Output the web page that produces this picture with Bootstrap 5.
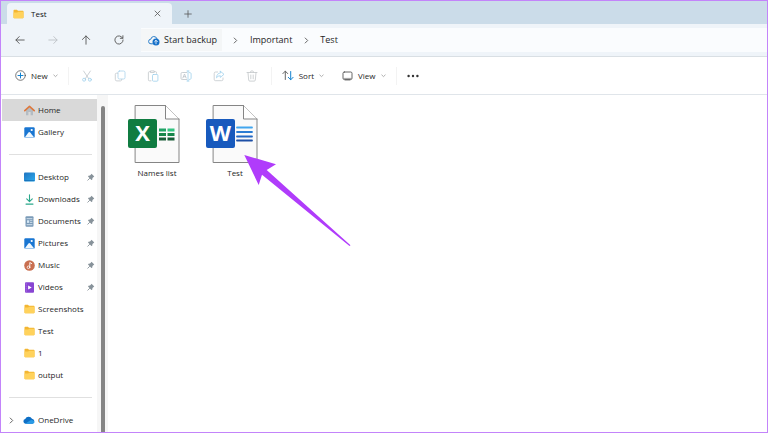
<!DOCTYPE html>
<html lang="en">
<head>
<meta charset="utf-8">
<meta name="viewport" content="width=device-width, initial-scale=1">
<title>Test</title>
<link href="https://cdn.jsdelivr.net/npm/bootstrap@5.3.0/dist/css/bootstrap.min.css" rel="stylesheet">
<style>
body{font-family:"Open Sans","Noto Sans",sans-serif;font-size:8px;line-height:12px;color:#262626;background:#fff}
svg{display:block;flex:none;fill:none;stroke-linecap:round;stroke-linejoin:round}
button{border:0;background:none;padding:0;color:inherit;line-height:inherit}
a{color:inherit;text-decoration:none}
.explorer{border:1px solid #c384fa;min-height:100vh}
.titlebar{background:#cbdce9;height:23px;padding:2px 0 0 6px}
.tab{width:165px;background:#eff4f9;border-radius:4px 4px 0 0;padding:0 11px 0 6px}
.tab-name{margin-left:7px;color:#111}
.new-tab{width:32px}
.navbar-row{height:33px;background:#eff4f9;border-bottom:1px solid #d9dfe4}
.nav-btns{padding-left:2px}
.nav-btns button{width:33px;height:24px}
.address{background:#fafcfe;height:24px;margin-left:6px;font-size:9px}
.backup{background:#f4f6f7;height:22px;padding:0 5px 0 7px;gap:4px}
.crumb-arrow{width:28px}
.tools{height:38px;padding-left:14px;border-bottom:1px solid #e0e5ea}
.tools button{height:24px}
.tool-text{gap:5px}
.tool-icons{padding:0 2px}
.tool-icon{width:33px}
.sep{width:1px;height:18px;background:#f3f3f3;margin:0 0 0 10px}
.sort-btn{margin-left:10px}
.view-btn{margin-left:18px}
.more-btn{margin-left:10px}
.sidebar{width:96px;padding:4px 0 0 1px}
.side-item{height:22px;padding:0 2px 0 22px;gap:3px}
.side-item.current{background:#d9d9d9}
.side-item.expandable{padding-left:7px}
.side-item .twisty{margin-right:6px}
.side-rule{height:23px;padding:11px 5px 0 7px}
.side-rule hr{margin:0;border-top:1px solid #e0e0e0;opacity:1}
.scroll-track{width:11px;background:#f6f6f6;padding:11px 3px 0 4px}
.scroll-thumb{background:#858585;border-radius:2px 2px 0 0}
.files{padding:9px 0 0 10px}
.file{width:78px;gap:3px}
.pointer{position:absolute;left:243px;top:153px}
</style>
</head>
<body>
<svg width="0" height="0" class="position-absolute" aria-hidden="true">
<defs>
<symbol id="folder" viewBox="0 0 11 10"><path d="M.5 1.5q0-.8.8-.8h2.6L5 1.8h4.8q.7 0 .7.7v6q0 .8-.7.8H1.3q-.8 0-.8-.8z" fill="#f3b632"/><path d="M.5 3.6h3.7l1-.9h5.3v5.8q0 .8-.7.8H1.3q-.8 0-.8-.8z" fill="#ffd25c"/></symbol>
<symbol id="pin" viewBox="0 0 8 8"><path d="M4.5.7 7.3 3.5 6.6 4 5.5 5 5.2 6.7 4.4 7 1 3.6 1.5 2.8 3 2.6 4 1.4z" fill="#87929a"/><path d="M2.6 5.4.8 7.2" stroke="#87929a" stroke-width=".9"/></symbol>
<symbol id="picture" viewBox="0 0 11 11"><rect x=".3" y=".3" width="10.4" height="10.4" rx="1.2" fill="#1976d2"/><path d="M.8 10.4 4.4 5.6q.9-1 1.8 0l4 4.8z" fill="#eff8ff"/><circle cx="7.7" cy="3" r="1.1" fill="#fff"/></symbol>
<symbol id="down" viewBox="0 0 5 4"><path d="m.8 1 1.7 1.6L4.2 1" stroke="#9a9a9a" stroke-width=".8"/></symbol>
<symbol id="right" viewBox="0 0 5 7"><path d="m1.2 1 2.500 2.500L1.200 6" stroke="#666" stroke-width="1"/></symbol>
</defs>
</svg>
<div class="explorer d-flex flex-column position-relative">
<header>
<div class="titlebar d-flex">
<div class="tab d-flex align-items-center">
<svg width="11" height="10"><use href="#folder"/></svg><span class="tab-name">Test</span>
<button class="ms-auto" type="button" aria-label="Close tab"><svg width="7" height="7" viewBox="0 0 7 7"><path d="m1 1 5 5m0-5L1 6" stroke="#555" stroke-width=".8"/></svg></button>
</div>
<button class="new-tab d-flex align-items-center justify-content-center" type="button" aria-label="New tab"><svg width="8" height="8" viewBox="0 0 8 8"><path d="M4 .7v6.6M.7 4h6.600" stroke="#555" stroke-width=".8"/></svg></button>
</div>
<div class="navbar-row d-flex align-items-center">
<div class="nav-btns d-flex">
<button class="d-flex align-items-center justify-content-center" type="button" aria-label="Back"><svg width="10" height="10" viewBox="0 0 10 10"><path d="M9.200 5H1m3.200-3.400L.9 5l3.300 3.400" stroke="#555" stroke-width=".9"/></svg></button>
<button class="d-flex align-items-center justify-content-center" type="button" aria-label="Forward"><svg width="10" height="10" viewBox="0 0 10 10"><path d="M.8 5H9M5.800 1.600 9.100 5 5.800 8.400" stroke="#bcc1c5" stroke-width=".9"/></svg></button>
<button class="d-flex align-items-center justify-content-center" type="button" aria-label="Up"><svg width="10" height="10" viewBox="0 0 10 10"><path d="M5 9.200V1M1.400 4.500 5 .9l3.600 3.600" stroke="#555" stroke-width=".9"/></svg></button>
<button class="d-flex align-items-center justify-content-center" type="button" aria-label="Refresh"><svg width="10" height="10" viewBox="0 0 10 10"><path d="M8.700 3.200A4.100 4.100 0 1 0 9.100 5M8.900.7v2.600H6.300" stroke="#555" stroke-width=".9"/></svg></button>
</div>
<nav class="address d-flex align-items-center flex-grow-1" aria-label="Address">
<a href="#" class="backup d-flex align-items-center"><svg width="12" height="11" viewBox="0 0 12 11"><path d="M4.500 8.800H3A2.300 2.300 0 0 1 2.800 4.200 3.200 3.200 0 0 1 9 3.700" stroke="#2c7fc9" stroke-width="1"/><circle cx="8" cy="7" r="3.500" fill="#1670c8"/><path d="M8 8.800V5.400M6.600 6.700 8 5.300l1.400 1.400" stroke="#fff" stroke-width=".8"/></svg>Start backup</a>
<span class="crumb-arrow d-flex justify-content-center"><svg width="5" height="7"><use href="#right"/></svg></span>
<a href="#">Important</a>
<span class="crumb-arrow d-flex justify-content-center"><svg width="5" height="7"><use href="#right"/></svg></span>
<a href="#">Test</a>
</nav>
</div>
<div class="tools d-flex align-items-center">
<button class="tool-text d-flex align-items-center" type="button"><svg width="11" height="11" viewBox="0 0 11 11"><circle cx="5.500" cy="5.500" r="4.800" stroke="#555" stroke-width=".8"/><path d="M5.500 3v5M3 5.500h5" stroke="#1583cf" stroke-width="1"/></svg><span>New</span><svg width="5" height="4"><use href="#down"/></svg></button>
<span class="sep"></span>
<div class="tool-icons d-flex">
<button class="tool-icon d-flex justify-content-center align-items-center" type="button" aria-label="Cut"><svg width="12" height="12" viewBox="0 0 12 12"><path d="m2.600 1 5.200 7.800M9.400 1 4.200 8.800" stroke="#bfc5ca" stroke-width=".8"/><circle cx="3.100" cy="9.700" r="1.500" stroke="#9fd0ec" stroke-width=".8"/><circle cx="8.900" cy="9.700" r="1.500" stroke="#9fd0ec" stroke-width=".8"/></svg></button>
<button class="tool-icon d-flex justify-content-center align-items-center" type="button" aria-label="Copy"><svg width="12" height="12" viewBox="0 0 12 12"><rect x="4" y="1" width="7" height="8" rx="1.500" stroke="#a9d3ec" stroke-width=".8"/><path d="M3.700 3.200H2.500q-1.200 0-1.200 1.200v5q0 1.500 1.500 1.500h3.700q1.300 0 1.300-1.600" stroke="#c3c8cc" stroke-width=".8"/></svg></button>
<button class="tool-icon d-flex justify-content-center align-items-center" type="button" aria-label="Paste"><svg width="12" height="12" viewBox="0 0 12 12"><path d="M4 10.800H2.300q-.9 0-.9-.9V2.600q0-.9.9-.9h1.300m3.800 0h1.200q.9 0 .9.9v.8M3.800.9h3.400v1.600H3.800z" stroke="#c3c8cc" stroke-width=".8"/><rect x="5.500" y="4.500" width="5.400" height="6.700" rx=".9" stroke="#9fd0ec" stroke-width=".8"/></svg></button>
<button class="tool-icon d-flex justify-content-center align-items-center" type="button" aria-label="Rename"><svg width="12" height="12" viewBox="0 0 12 12"><path d="M6.700 2.500H2.200q-1.200 0-1.200 1.200v4.600q0 1.200 1.200 1.200h4.500M2.800 8l1.700-4L6.200 8M3.400 6.700h2.200" stroke="#bcc4ca" stroke-width=".8"/><path d="M8 1v10M7 1h2M7 11h2m.3-8.500q1.800 0 1.800 1.200v4.600q0 1.200-1.800 1.200" stroke="#9fd0ec" stroke-width=".8"/></svg></button>
<button class="tool-icon d-flex justify-content-center align-items-center" type="button" aria-label="Share"><svg width="12" height="12" viewBox="0 0 12 12"><path d="M4.700 2H2.600q-1.400 0-1.400 1.400v5.900q0 1.400 1.400 1.400h6q1.400 0 1.400-1.400V8" stroke="#c3c8cc" stroke-width=".8"/><path d="M7.300 1.200 11 4.300 7.300 7.400V5.700Q4.800 5.700 3.500 7.800 3.800 3.200 7.300 2.900z" stroke="#9fd0ec" stroke-width=".8"/></svg></button>
<button class="tool-icon d-flex justify-content-center align-items-center" type="button" aria-label="Delete"><svg width="12" height="12" viewBox="0 0 12 12"><path d="M1 2.500h10M4.300 2.300Q4.300.8 6 .8t1.700 1.500M2 2.700l.7 7.400q.1 1 1.100 1h4.400q1 0 1.100-1l.7-7.400M4.800 5v3.800M7.200 5v3.800" stroke="#c3c6c9" stroke-width=".8"/></svg></button>
</div>
<span class="sep ms-0"></span>
<button class="tool-text sort-btn d-flex align-items-center" type="button"><svg width="12" height="11" viewBox="0 0 12 11"><path d="M3.300 9.500V1.200M.9 3.600l2.400-2.500 2.400 2.500" stroke="#666" stroke-width="1"/><path d="M8.700 1.500v8.200M6.300 7.300l2.400 2.500 2.400-2.500" stroke="#1583cf" stroke-width="1"/></svg><span>Sort</span><svg width="5" height="4"><use href="#down"/></svg></button>
<button class="tool-text view-btn d-flex align-items-center" type="button"><svg width="11" height="10" viewBox="0 0 11 10"><rect x="1" y="1" width="9" height="7.500" rx="1.300" stroke="#555" stroke-width=".9"/><path d="M2 7.400h7M3 9.200h5" stroke="#777" stroke-width=".7"/></svg><span>View</span><svg width="5" height="4"><use href="#down"/></svg></button>
<span class="sep"></span>
<button class="more-btn d-flex align-items-center" type="button" aria-label="See more"><svg width="12" height="4" viewBox="0 0 12 4"><g fill="#333"><circle cx="1.600" cy="2" r="1.200"/><circle cx="6" cy="2" r="1.200"/><circle cx="10.400" cy="2" r="1.200"/></g></svg></button>
</div>
</header>
<div class="d-flex flex-grow-1">
<nav class="sidebar flex-shrink-0" aria-label="Folders">
<a href="#" class="side-item current d-flex align-items-center"><svg width="11" height="11" viewBox="0 0 11 11"><path d="M2 5v5.200h2.400V7.100h2.200v3.100H9V5L5.500 2z" fill="#b4bcc3"/><path d="m.8 5.700 4.700-4.400 4.700 4.400" stroke="#dd783d" stroke-width="1.600"/></svg>Home</a>
<a href="#" class="side-item d-flex align-items-center"><svg width="11" height="11"><use href="#picture"/></svg>Gallery</a>
<div class="side-rule"><hr></div>
<a href="#" class="side-item d-flex align-items-center"><svg width="11" height="10" viewBox="0 0 11 10"><defs><linearGradient id="desk" x2="1" y2="1"><stop stop-color="#1f73bf"/><stop offset="1" stop-color="#2cabed"/></linearGradient></defs><rect y=".5" width="11" height="9" rx="1" fill="url(#desk)"/><path d="M1 8.600h9" stroke="#1264ac" stroke-width=".7"/></svg>Desktop<svg class="ms-auto" width="8" height="8"><use href="#pin"/></svg></a>
<a href="#" class="side-item d-flex align-items-center"><svg width="11" height="11" viewBox="0 0 11 11"><path d="M5.500.8v6.600M2.700 4.900l2.800 2.800 2.800-2.800M2 10.100h7" stroke="#2aa88b" stroke-width="1.100"/></svg>Downloads<svg class="ms-auto" width="8" height="8"><use href="#pin"/></svg></a>
<a href="#" class="side-item d-flex align-items-center"><svg width="11" height="11" viewBox="0 0 11 11"><rect x="1.500" y=".3" width="8" height="10.400" rx="1" fill="#7b9bb8"/><path d="M3 2.700h5M3 8.700h5" stroke="#e6f0f8" stroke-width=".8"/><path d="M3 4.300h2.200v2.600H3z" fill="#d6e8f6"/><path d="M6.300 4.700H8M6.300 6.500H8" stroke="#e6f0f8" stroke-width=".7"/></svg>Documents<svg class="ms-auto" width="8" height="8"><use href="#pin"/></svg></a>
<a href="#" class="side-item d-flex align-items-center"><svg width="11" height="11"><use href="#picture"/></svg>Pictures<svg class="ms-auto" width="8" height="8"><use href="#pin"/></svg></a>
<a href="#" class="side-item d-flex align-items-center"><svg width="11" height="11" viewBox="0 0 11 11"><circle cx="5.500" cy="5.500" r="5.300" fill="#c96f50"/><circle cx="4.500" cy="7.300" r="1.300" stroke="#fff" stroke-width=".8"/><path d="M5.800 7.200V2.500l1.900 1.100" stroke="#fff" stroke-width=".9"/></svg>Music<svg class="ms-auto" width="8" height="8"><use href="#pin"/></svg></a>
<a href="#" class="side-item d-flex align-items-center"><svg width="11" height="11" viewBox="0 0 11 11"><rect x="1" y=".3" width="9" height="10.400" rx="1" fill="#8845d2"/><path d="M4.100 3.400v4.200l3.600-2.100z" fill="#fff"/><path d="M2.200 1.600v8" stroke="#b27be8" stroke-width=".7" stroke-dasharray="1 1.300"/></svg>Videos<svg class="ms-auto" width="8" height="8"><use href="#pin"/></svg></a>
<a href="#" class="side-item d-flex align-items-center"><svg width="11" height="10"><use href="#folder"/></svg>Screenshots</a>
<a href="#" class="side-item d-flex align-items-center"><svg width="11" height="10"><use href="#folder"/></svg>Test</a>
<a href="#" class="side-item d-flex align-items-center"><svg width="11" height="10"><use href="#folder"/></svg>1</a>
<a href="#" class="side-item d-flex align-items-center"><svg width="11" height="10"><use href="#folder"/></svg>output</a>
<div class="side-rule"><hr></div>
<a href="#" class="side-item expandable d-flex align-items-center"><svg class="twisty" width="5" height="7"><use href="#right"/></svg><svg width="12" height="8" viewBox="0 0 12 8"><path d="M2.500 7.700A2.400 2.400 0 0 1 2.200 3 3.800 3.800 0 0 1 9 2.800a2.500 2.500 0 0 1 .5 4.900z" fill="#0f6fc5"/><path d="M2.200 7.700 7 4.600q1.200-.8 2.500-.3 2 .6 2 2-.2 1.400-2 1.400z" fill="#2a9be6"/></svg>OneDrive</a>
</nav>
<div class="scroll-track d-flex flex-shrink-0"><div class="scroll-thumb flex-grow-1"></div></div>
<main class="files d-flex flex-grow-1 align-items-start">
<a href="#" class="file d-flex flex-column align-items-center"><svg width="58" height="60" viewBox="0 0 58 60"><path d="M7.500 1.500h30l13.500 13.500v43.500H7.500z" fill="#fafafa" stroke="#858585"/><path d="M37.500 1.500V15H51" fill="#fff" stroke="#858585"/><rect y="15" width="29" height="29" rx="2" fill="#107c41"/><path d="M31 26h7" stroke="#21a366" stroke-width="3" stroke-linecap="butt"/><path d="M39.500 26h7" stroke="#33c481" stroke-width="3" stroke-linecap="butt"/><path d="M31 30.500h7m1.500 0h7" stroke="#17864a" stroke-width="3" stroke-linecap="butt"/><path d="M31 35h7m1.500 0h7" stroke="#185c37" stroke-width="3" stroke-linecap="butt"/><text x="14.500" y="37" text-anchor="middle" font-size="22" font-weight="700" fill="#fff">X</text></svg>Names list</a>
<a href="#" class="file d-flex flex-column align-items-center"><svg width="58" height="60" viewBox="0 0 58 60"><path d="M7.500 1.500h30l13.500 13.500v43.500H7.500z" fill="#fafafa" stroke="#858585"/><path d="M37.500 1.500V15H51" fill="#fff" stroke="#858585"/><rect y="15" width="29" height="29" rx="2" fill="#185abd"/><path d="M31 23.500h15" stroke="#41a5ee" stroke-width="1.800"/><path d="M31 28h15" stroke="#2b7cd3" stroke-width="1.800"/><path d="M31 32.500h15" stroke="#2368c4" stroke-width="1.800"/><path d="M31 36.500h15" stroke="#1d4fa5" stroke-width="1.800"/><text x="14.500" y="37" text-anchor="middle" font-size="22" font-weight="700" fill="#fff">W</text></svg>Test</a>
</main>
</div>
<svg class="pointer" width="108" height="93" viewBox="244 154 108 93" aria-hidden="true"><path d="m244.300 155 31.700 9.300-9.300 5.700 83.800 75.300-1 .7-87.500-71.300-3.300 10.300z" fill="#b03cfb"/></svg>
</div>
<script src="https://cdn.jsdelivr.net/npm/bootstrap@5.3.0/dist/js/bootstrap.bundle.min.js"></script>
</body>
</html>
